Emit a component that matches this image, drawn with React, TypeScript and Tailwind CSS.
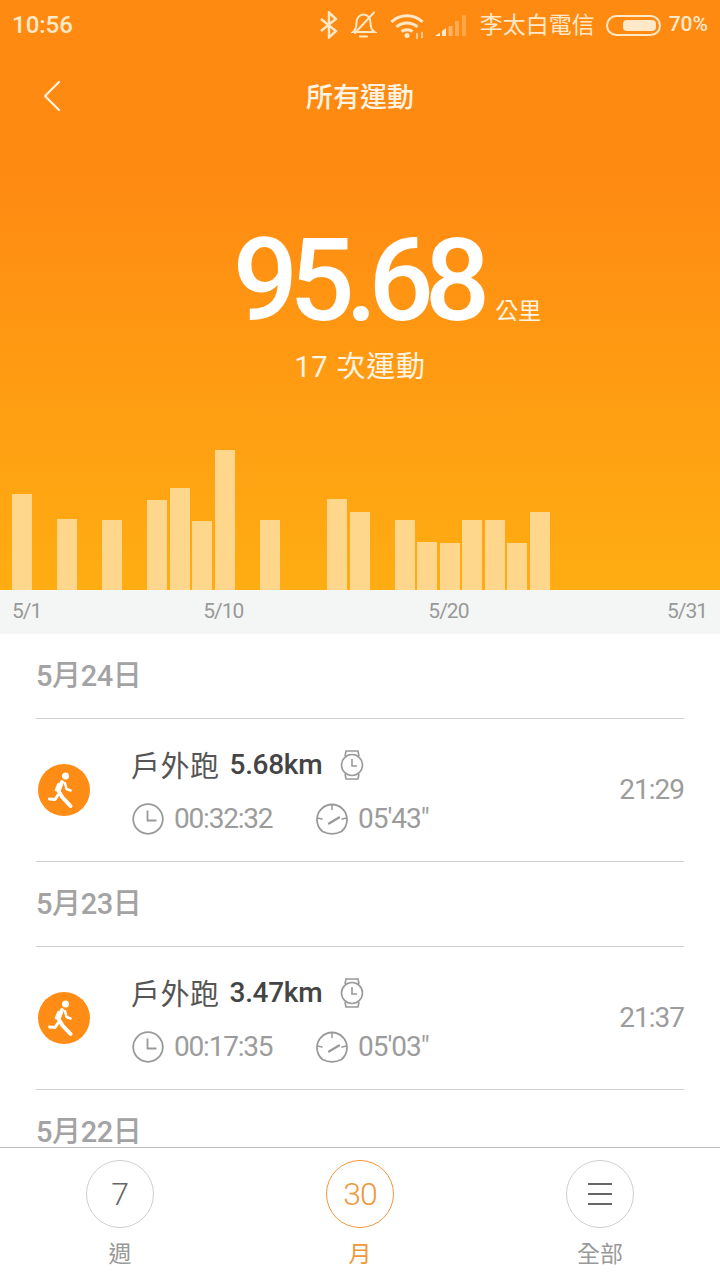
const CJK = '"Noto Sans CJK TC", sans-serif';
const NUM = 'font-["Roboto","Noto_Sans_CJK_TC",sans-serif]';

// one entry per day of May, 0 means no run that day
const bars = [96, 0, 71, 0, 70, 0, 90, 102, 69, 140, 0, 70, 0, 0, 91, 78, 0, 70, 48, 47, 70, 70, 47, 78, 0, 0, 0, 0, 0, 0, 0];

const axisLabels = [
  { label: '5/1', className: 'ml-3' },
  { label: '5/10', className: 'ml-[162px]' },
  { label: '5/20', className: 'ml-[185px]' },
  { label: '5/31', className: 'ml-auto mr-[13px]' },
];

const BackIcon = () => (
  <svg width="20" height="32" viewBox="0 0 20 32" fill="none" stroke="#fff4e4" strokeWidth="2.200" strokeLinecap="round" strokeLinejoin="round">
    <path d="M17 2L3 16l14 14" />
  </svg>
);

const BluetoothIcon = () => (
  <svg width="20" height="28" viewBox="0 0 20 28" fill="none" stroke="#ffe9c9" strokeWidth="2.400">
    <path d="M2 8l15 12-7 6.500V1.500L17 8 2 20" />
  </svg>
);

const BellOffIcon = () => (
  <svg width="26" height="28" viewBox="0 0 26 28" fill="none" stroke="#ffe9c9" strokeWidth="2" strokeLinecap="round">
    <path d="M2 21c3-2 3.500-5 3.500-9.500C5.500 7 8.500 3.500 12.500 3.500c4 0 7 3.500 7 8 0 4.500.5 7.500 4 9.500H2z" />
    <path d="M9 25.500h7" />
    <path d="M4 22L23 1.500" />
  </svg>
);

const WifiIcon = () => (
  <svg width="36" height="28" viewBox="0 0 36 28" fill="none" stroke="#ffe9c9" strokeWidth="3">
    <path d="M1.500 11c8-8.500 23-8.500 31 0" />
    <path d="M6.500 16c5.500-5.500 15.500-5.500 21 0" />
    <path d="M11.500 20.500c3-2.500 8-2.500 11 0" />
    <circle cx="17" cy="24.500" r="2.500" fill="#ffe9c9" stroke="none" />
    <path d="M27 22v6M32 21v6" strokeWidth="1.800" opacity="0.7" />
  </svg>
);

const SignalIcon = () => (
  <svg width="32" height="24" viewBox="0 0 32 24" fill="#ffe9c9">
    <path d="M0 23l5-3.500V23z" />
    <path d="M7 18l4-3v8H7z" />
    <path d="M13.500 13h4v10h-4z" opacity="0.45" />
    <path d="M20 8h4v15h-4z" opacity="0.35" />
    <path d="M27 2h4v21h-4z" opacity="0.3" />
  </svg>
);

const ClockIcon = () => (
  <svg width="32" height="32" viewBox="0 0 32 32" fill="none" stroke="#999" strokeWidth="1.800">
    <circle cx="16" cy="16" r="14.800" />
    <path d="M15.500 7.500v10h9" />
  </svg>
);

const PaceIcon = () => (
  <svg width="32" height="32" viewBox="0 0 32 32" fill="none" stroke="#999" strokeWidth="1.800" strokeLinecap="round">
    <path d="M6.500 28.500C3 25.500 1 21 1 16.500 1 8 8 1.500 16 1.500S31 8 31 16.500c0 4.500-2 9-5.500 12-6 3-13 3-19 0z" />
    <path d="M16 2v4.500M1.500 15l4.500 1M30.500 15l-4.500 1" strokeWidth="1.500" />
    <path d="M13 20.500l10-6" strokeWidth="2.200" />
  </svg>
);

const WatchIcon = () => (
  <svg width="24" height="30" viewBox="0 0 24 30" fill="none" stroke="#999" strokeWidth="1.600">
    <circle cx="12" cy="15" r="10.500" />
    <path d="M5 6l1-5h12l1 5M5 24l1 5h12l1-5" />
    <path d="M12 9v7h5" />
  </svg>
);

const RunIcon = () => (
  <div className="flex h-[52px] w-[52px] items-center justify-center rounded-full bg-[#ff8c14]">
    <svg width="52" height="52" viewBox="0 0 52 52" fill="none" stroke="#fff" strokeLinecap="round" strokeLinejoin="round">
      <circle cx="27.500" cy="12" r="3.500" fill="#fff" stroke="none" />
      <path d="M24 18l-3.500 9 4 6.500 8 8.500" strokeWidth="4" />
      <path d="M27 19l1.500 6 4 1.500" strokeWidth="2.500" />
      <path d="M20 31l-3 4.500-5.500-.5" strokeWidth="3" />
      <path d="M20.500 20l-2.500 6" strokeWidth="2.500" />
    </svg>
  </div>
);

const DateHeader = ({ text }: { text: string }) => (
  <div className={`flex h-[84px] shrink-0 items-center pt-0.5 text-[29px] font-medium tracking-[-0.4px] text-[#a3a3a3] ${NUM}`}>{text}</div>
);

type RowProps = { km: string; duration: string; pace: string; time: string };

const WorkoutRow = ({ km, duration, pace, time }: RowProps) => (
  <div className="flex h-[144px] shrink-0 items-center border-y border-[#cfcfcf]">
    <div className="ml-0.5 mr-[42px]">
      <RunIcon />
    </div>
    <div className="flex flex-1 flex-col gap-[18px] pt-1">
      <div className="flex h-9 items-center">
        <span className="ml-[-1px] text-[29px] tracking-[0.5px] text-[#555]" style={{ fontFamily: CJK }}>戶外跑</span>
        <span className={`ml-[10px] text-[28px] font-medium tracking-[-0.3px] text-[#444] ${NUM}`}>{km}</span>
        <span className="ml-[18px]"><WatchIcon /></span>
      </div>
      <div className="flex h-9 items-center">
        <ClockIcon />
        <span className={`ml-[10px] w-[142px] text-[28px] tracking-[-1.200px] text-[#9c9c9c] ${NUM}`}>{duration}</span>
        <PaceIcon />
        <span className={`ml-[10px] text-[28px] tracking-[-1px] text-[#9c9c9c] ${NUM}`}>{pace}</span>
      </div>
    </div>
    <span className={`text-[28px] tracking-[-1px] text-[#9c9c9c] ${NUM}`}>{time}</span>
  </div>
);

const TabButton = ({ label, active, children }: { label: string; active?: boolean; children: React.ReactNode }) => (
  <div className="flex w-[240px] flex-col items-center">
    <div className={`flex h-[68px] w-[68px] items-center justify-center rounded-full border ${active ? 'border-[#f0973a] text-[#f0973a]' : 'border-[#cfcfcf] text-[#666]'}`}>
      {children}
    </div>
    <span className={`mt-[7px] text-[23px] leading-[34px] ${active ? 'text-[#f0973a]' : 'text-[#999]'}`} style={{ fontFamily: CJK }}>{label}</span>
  </div>
);

export default function App() {
  return (
    <div className="flex h-[1280px] w-[720px] flex-col overflow-hidden bg-white" style={{ fontFamily: CJK }}>
      <div className="flex h-[590px] shrink-0 flex-col bg-gradient-to-b from-[#ff8a12] from-[30%] to-[#ffad12]">
        {/* status bar */}
        <div className="flex h-[50px] shrink-0 items-center px-3 text-[#ffe9c9]">
          <span className={`text-[24px] font-medium ${NUM}`}>10:56</span>
          <div className="ml-auto flex items-center">
            <BluetoothIcon />
            <span className="ml-[12px]"><BellOffIcon /></span>
            <span className="ml-[13px]"><WifiIcon /></span>
            <span className="ml-[9px]"><SignalIcon /></span>
            <span className="ml-[13px] mt-[-4px] text-[23px]">李太白電信</span>
            <div className="ml-[11px] flex h-[21px] w-[55px] items-center justify-end rounded-full border-2 border-[#ffe9c9] px-[3px]">
              <div className="h-[11px] w-[33px] rounded-[4px] bg-[#ffe9c9]" />
            </div>
            <span className={`ml-[8px] text-[21px] font-medium ${NUM}`}>70%</span>
          </div>
        </div>
        {/* title bar */}
        <div className="relative flex h-[92px] shrink-0 items-center justify-center">
          <div className="absolute left-[42px] top-[30px]">
            <BackIcon />
          </div>
          <span className="text-[27px] font-medium text-[#fff4e4]">所有運動</span>
        </div>
        {/* total */}
        <div className="flex shrink-0 flex-col items-center">
          <div className="mt-[79px] ml-[54px] flex h-[120px] items-end">
            <span className={`text-[115px] font-medium leading-[120px] tracking-[-9px] text-white ${NUM}`}>95.68</span>
            <span className="mb-[17px] ml-[14px] text-[23px] leading-[30px] text-[#fff4e4]">公里</span>
          </div>
          <div className={`mt-[6px] text-[29px] leading-[40px] tracking-[0.8px] text-[#fff4e4] ${NUM}`}>17 次運動</div>
        </div>
        {/* daily bars */}
        <div className="mt-auto flex items-end pl-3">
          {bars.map((h, i) => (
            <div key={i} className="w-[22.520px] shrink-0">
              {h > 0 && <div className="w-5 bg-[#ffd78c]" style={{ height: h }} />}
            </div>
          ))}
        </div>
      </div>

      {/* date axis */}
      <div className={`flex h-[44px] shrink-0 items-center bg-[#f4f6f5] text-[21px] tracking-[-1px] text-[#999] ${NUM}`}>
        {axisLabels.map((a) => (
          <span key={a.label} className={a.className}>{a.label}</span>
        ))}
      </div>

      {/* workout list */}
      <div className="flex min-h-0 flex-1 flex-col overflow-hidden px-9">
        <DateHeader text="5月24日" />
        <WorkoutRow km="5.68km" duration="00:32:32" pace="05′43″" time="21:29" />
        <DateHeader text="5月23日" />
        <WorkoutRow km="3.47km" duration="00:17:35" pace="05′03″" time="21:37" />
        <DateHeader text="5月22日" />
      </div>

      {/* bottom tabs */}
      <div className="flex h-[133px] shrink-0 border-t border-[#bdbdbd] bg-white pt-3">
        <TabButton label="週">
          <span className={`text-[32px] font-light ${NUM}`}>7</span>
        </TabButton>
        <TabButton label="月" active>
          <span className={`text-[32px] font-light tracking-[-1px] ${NUM}`}>30</span>
        </TabButton>
        <TabButton label="全部">
          <div className="flex w-6 flex-col gap-[8px]">
            <div className="h-0.5 bg-[#666]" />
            <div className="h-0.5 bg-[#666]" />
            <div className="h-0.5 bg-[#666]" />
          </div>
        </TabButton>
      </div>
    </div>
  );
}
